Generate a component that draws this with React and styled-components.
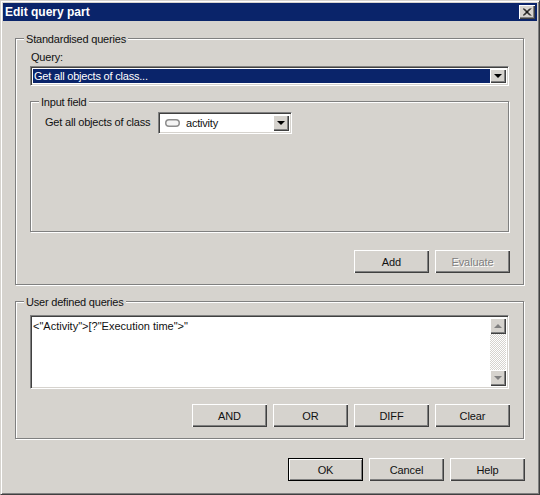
import React from 'react';
import styled, { createGlobalStyle } from 'styled-components';

const FACE = '#d6d3ce';
const FONT = `"Liberation Sans", Arial, sans-serif`;

const GlobalStyle = createGlobalStyle`
  html, body {
    margin: 0;
    padding: 0;
    background: ${FACE};
  }
`;

const App = () => {
    return (
        <>
            <GlobalStyle />
            <Dialog>
                <TitleBar>
                    <Title>Edit query part</Title>
                    <CloseButton aria-label="Close">
                        <svg width="9" height="8" viewBox="0 0 9 8">
                            <path d="M1 0.5L8 7.5M2 0.5L9 7.5M8 0.5L1 7.5M9 0.5L2 7.5" stroke="#000" strokeWidth="1" fill="none" transform="translate(-1 0)" />
                        </svg>
                    </CloseButton>
                </TitleBar>
                <Body>
                    <Group $height={247}>
                        <Legend>Standardised queries</Legend>
                        <FieldLabel>Query:</FieldLabel>
                        <Combo>
                            <SelectedValue>Get all objects of class...</SelectedValue>
                            <ComboArrow><Arrow /></ComboArrow>
                        </Combo>
                        <InnerGroup>
                            <Legend>Input field</Legend>
                            <InputRow>
                                <InputLabel>Get all objects of class</InputLabel>
                                <ClassCombo>
                                    <ClassValue>
                                        <svg width="15" height="8" viewBox="0 0 15 8">
                                            <rect x="0.75" y="0.75" width="13.5" height="6.5" rx="3.25" fill="#f4f4f4" stroke="#8c8c8c" strokeWidth="1.5" />
                                        </svg>
                                        activity
                                    </ClassValue>
                                    <ComboArrow><Arrow /></ComboArrow>
                                </ClassCombo>
                            </InputRow>
                        </InnerGroup>
                        <ButtonRow>
                            <Button>Add</Button>
                            <Button disabled>Evaluate</Button>
                        </ButtonRow>
                    </Group>
                    <Group $height={138}>
                        <Legend>User defined queries</Legend>
                        <QueryBox>
                            <QueryText>&lt;"Activity"&gt;[?"Execution time"&gt;"</QueryText>
                            <ScrollBar>
                                <ScrollButton><Arrow $up $grey /></ScrollButton>
                                <ScrollTrack />
                                <ScrollButton><Arrow $grey /></ScrollButton>
                            </ScrollBar>
                        </QueryBox>
                        <ButtonRow>
                            <Button>AND</Button>
                            <Button>OR</Button>
                            <Button>DIFF</Button>
                            <Button>Clear</Button>
                        </ButtonRow>
                    </Group>
                    <Footer>
                        <Button $default>OK</Button>
                        <Button>Cancel</Button>
                        <Button>Help</Button>
                    </Footer>
                </Body>
            </Dialog>
        </>
    );
};

const Dialog = styled.div`
  width: 540px;
  height: 495px;
  box-sizing: border-box;
  padding: 3px;
  background: ${FACE};
  border: 1px solid;
  border-color: ${FACE} #404040 #404040 ${FACE};
  box-shadow: inset 1px 1px 0 #fff, inset -1px -1px 0 #808080;
  display: flex;
  flex-direction: column;
  font: 11px ${FONT};
  letter-spacing: -0.2px;
  color: #111;
  overflow: hidden;
`;

const TitleBar = styled.div`
  height: 18px;
  flex: none;
  margin: -1px -1px 0 -1px;
  background: #0a246a;
  display: flex;
  align-items: center;
  justify-content: space-between;
  padding: 0 2px 0 2px;
`;

const Title = styled.div`
  color: #fff;
  font: bold 12px ${FONT};
  letter-spacing: 0;
`;

const CloseButton = styled.div`
  width: 16px;
  height: 14px;
  box-sizing: border-box;
  background: ${FACE};
  display: flex;
  align-items: center;
  justify-content: center;
  box-shadow: inset 1px 1px 0 #fff, inset -1px -1px 0 #404040, inset -2px -2px 0 #808080;
`;

const Body = styled.div`
  flex: 1;
  padding: 17px 12px 0 11px;
  display: flex;
  flex-direction: column;
`;

const Group = styled.div`
  position: relative;
  box-sizing: border-box;
  height: ${props => props.$height}px;
  border: 1px solid #808080;
  box-shadow: inset 1px 1px 0 #fff, 1px 1px 0 #fff;
  padding: 12px 14px 0 14px;
  display: flex;
  flex-direction: column;
  & + & {
    margin-top: 16px;
  }
`;

const Legend = styled.span`
  position: absolute;
  top: -7px;
  left: 8px;
  padding: 0 2px;
  background: ${FACE};
  line-height: 15px;
`;

const FieldLabel = styled.label`
  line-height: 13px;
  margin-left: 1px;
  margin-bottom: 2px;
`;

const sunken = `
  background: #fff;
  border: 1px solid;
  border-color: #808080 #fff #fff #808080;
  box-shadow: inset 1px 1px 0 #404040, inset -1px -1px 0 ${FACE};
  box-sizing: border-box;
`;

const Combo = styled.div`
  ${sunken}
  height: 20px;
  padding: 2px;
  display: flex;
`;

const SelectedValue = styled.div`
  flex: 1;
  background: #0a246a;
  color: #fff;
  line-height: 15px;
  padding-left: 1px;
`;

const raised = `
  background: ${FACE};
  display: flex;
  align-items: center;
  justify-content: center;
  box-shadow: inset 1px 1px 0 #fff, inset -1px -1px 0 #404040, inset -2px -2px 0 #808080;
`;

const ComboArrow = styled.div`
  ${raised}
  width: 16px;
  flex: none;
`;

const Arrow = styled.span`
  width: 0;
  height: 0;
  border-left: 4px solid transparent;
  border-right: 4px solid transparent;
  ${props => props.$up ? 'border-bottom' : 'border-top'}: 4px solid ${props => props.$grey ? '#808080' : '#000'};
`;

const InnerGroup = styled.div`
  position: relative;
  box-sizing: border-box;
  height: 131px;
  margin-top: 15px;
  border: 1px solid #808080;
  box-shadow: inset 1px 1px 0 #fff, 1px 1px 0 #fff;
  padding: 10px 0 0 14px;
`;

const InputRow = styled.div`
  display: flex;
  align-items: center;
  gap: 6px;
`;

const InputLabel = styled.span`
  width: 107px;
  line-height: 18px;
  padding-bottom: 2px;
  white-space: nowrap;
`;

const ClassCombo = styled(Combo)`
  width: 134px;
  height: 22px;
`;

const ClassValue = styled.div`
  flex: 1;
  display: flex;
  align-items: center;
  gap: 6px;
  padding-left: 4px;
`;

const ButtonRow = styled.div`
  display: flex;
  justify-content: flex-end;
  gap: 6px;
  margin-top: auto;
  margin-right: -1px;
  margin-bottom: 11px;
`;

const Button = styled.button`
  width: 75px;
  height: 23px;
  flex: none;
  padding: 0;
  border: none;
  border-radius: 0;
  background: ${FACE};
  font: 11px ${FONT};
  letter-spacing: -0.1px;
  color: ${props => props.disabled ? '#808080' : '#111'};
  text-shadow: ${props => props.disabled ? '1px 1px 0 #fff' : 'none'};
  box-shadow: ${props => props.$default
        ? 'inset 0 0 0 1px #000, inset 2px 2px 0 #fff, inset -2px -2px 0 #808080'
        : 'inset 1px 1px 0 #fff, inset -1px -1px 0 #404040, inset -2px -2px 0 #808080'};
`;

const QueryBox = styled.div`
  ${sunken}
  height: 74px;
  margin-top: 1px;
  padding: 2px;
  display: flex;
`;

const QueryText = styled.div`
  flex: 1;
  line-height: 16px;
  letter-spacing: 0;
`;

const ScrollBar = styled.div`
  width: 16px;
  flex: none;
  display: flex;
  flex-direction: column;
`;

const ScrollButton = styled.div`
  ${raised}
  height: 16px;
  flex: none;
`;

const ScrollTrack = styled.div`
  flex: 1;
  background: repeating-conic-gradient(${FACE} 0 25%, #fff 0 50%) 0 0 / 2px 2px;
`;

const Footer = styled.div`
  display: flex;
  justify-content: flex-end;
  gap: 6px;
  margin-top: 19px;
  margin-right: -1px;
`;

export default App;
